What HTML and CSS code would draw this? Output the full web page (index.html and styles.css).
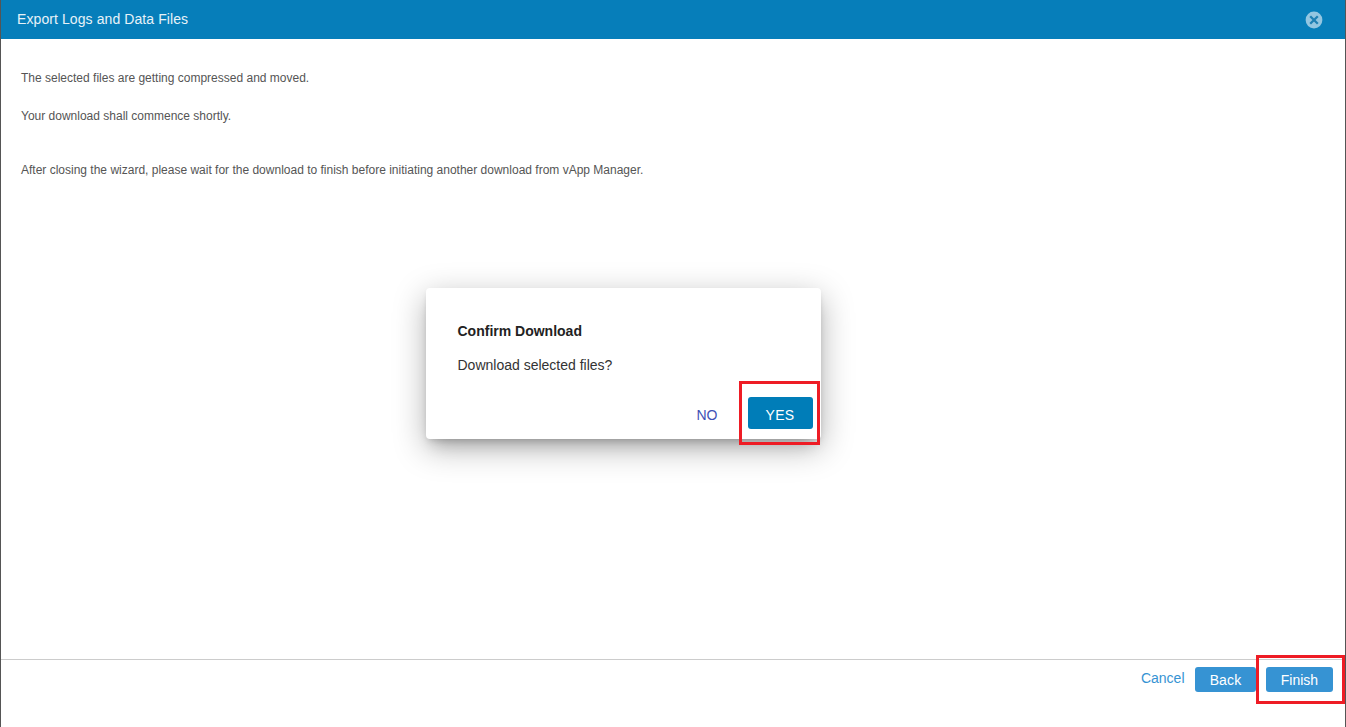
FILE: index.html
```html
<!DOCTYPE html>
<html lang="en">
<head>
<meta charset="utf-8">
<title>Export Logs and Data Files</title>
<link rel="stylesheet" href="styles.css">
</head>
<body>
<div class="wizard">
  <header class="wizard-header">
    <h1 class="wizard-title">Export Logs and Data Files</h1>
    <button class="close" aria-label="Close">
      <svg width="18" height="18" viewBox="0 0 18 18"><circle cx="9" cy="9" r="8.4" fill="#93c6e1"/><path d="M5.2 5.2l7.6 7.6M12.8 5.2l-7.6 7.6" stroke="#1f80b4" stroke-width="2.3"/></svg>
    </button>
  </header>
  <main class="wizard-body">
    <p class="line">The selected files are getting compressed and moved.</p>
    <p class="line">Your download shall commence shortly.</p>
    <p class="line note">After closing the wizard, please wait for the download to finish before initiating another download from vApp Manager.</p>
  </main>
  <footer class="wizard-footer">
    <a class="cancel">Cancel</a>
    <button class="button back">Back</button>
    <div class="highlight finish-mark"><button class="button finish">Finish</button></div>
  </footer>
</div>
<section class="dialog" role="dialog">
  <h2 class="dialog-title">Confirm Download</h2>
  <p class="dialog-text">Download selected files?</p>
  <div class="dialog-actions">
    <button class="no">NO</button>
    <div class="highlight yes-mark"><button class="yes">YES</button></div>
  </div>
</section>
</body>
</html>
```
FILE: styles.css
```css
* { box-sizing: border-box; }
body { margin: 0; font-family: "Liberation Sans", Arial, sans-serif; background: #fff; overflow: hidden; }
h1, h2, p { margin: 0; }
button { border: 0; padding: 0; background: none; font-family: inherit; display: block; }
.wizard { height: 727px; display: flex; flex-direction: column; border: solid #555; border-width: 0 1px; }
.wizard-header { height: 39px; flex: none; display: flex; justify-content: space-between; padding: 11px 22px 0 16px; background: #067eba; }
.wizard-title { font-size: 14px; line-height: 16px; font-weight: 400; letter-spacing: .09px; color: #e6f2f8; }
.close { width: 18px; height: 18px; }
.close svg { display: block; }
.wizard-body { flex: 1; padding: 31px 20px 0; }
.line { font-size: 12px; line-height: 16px; margin-bottom: 22px; color: #555; }
.note { margin-top: 38px; }
.wizard-footer { height: 68px; flex: none; display: flex; align-items: flex-start; justify-content: flex-end; border-top: 1px solid #ccc; }
.cancel { font-size: 14px; line-height: 16px; margin: 10px 10.5px 0 0; color: #3693d3; }
.button { height: 25px; border-radius: 3px; background: #3693d3; color: #fff; font-size: 14px; line-height: 26px; }
.back { width: 61px; margin-top: 7px; letter-spacing: .15px; }
.finish { width: 67px; }
.highlight { border: 3px solid #ee1c25; }
.finish-mark { width: 89px; height: 49px; margin-top: -5px; padding: 9px 0 0 7px; position: relative; }
.dialog {
  position: absolute; left: 426px; top: 288px; width: 395px; height: 151px;
  padding: 35px 1px 0 31.5px; border-radius: 4px; background: #fff;
  box-shadow: 0 11px 15px -7px rgba(0, 0, 0, .2), 0 9px 32px 1px rgba(0, 0, 0, .28), 0 3px 6px -2px rgba(0, 0, 0, .14);
}
.dialog-title { font-size: 14px; line-height: 16px; font-weight: 700; color: #222; }
.dialog-text { margin-top: 18px; font-size: 14px; line-height: 16px; color: #333; }
.dialog-actions { display: flex; justify-content: flex-end; align-items: flex-start; margin-top: 8px; }
.no { margin: 26px 21.5px 0 0; font-size: 14px; line-height: 16px; color: #3f51b5; }
.yes-mark { width: 81px; height: 64px; padding: 13px 0 0 6px; }
.yes { width: 65px; height: 32px; border-radius: 3px; background: #007db8; color: #fff; font-size: 14px; line-height: 36px; letter-spacing: .4px; padding-right: 1px; }
```
